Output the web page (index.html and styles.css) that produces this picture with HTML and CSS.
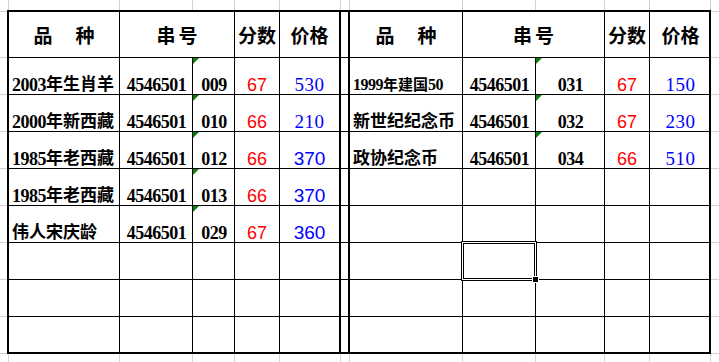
FILE: index.html
```html
<!DOCTYPE html>
<html lang="zh-CN">
<head>
<meta charset="utf-8">
<title>品种 串号 分数 价格</title>
<link rel="stylesheet" href="styles.css">
</head>
<body>
<div class="page">
  <div class="sheet">
    <!-- header row -->
    <div class="c h"><span class="ls2">品　种</span></div>
    <div class="c h span2"><span class="ls3">串号</span></div>
    <div class="c h">分数</div>
    <div class="c h tr">价格</div>
    <div class="c tr"></div>
    <div class="c h"><span class="ls2">品　种</span></div>
    <div class="c h span2"><span class="ls3">串号</span></div>
    <div class="c h">分数</div>
    <div class="c h lc">价格</div>

    <!-- row 1 -->
    <div class="c name"><span class="d">2003</span>年生肖羊</div>
    <div class="c num">4546501</div>
    <div class="c num err">009</div>
    <div class="c red">67</div>
    <div class="c blue tr">530</div>
    <div class="c tr"></div>
    <div class="c name small"><span class="d">1999</span>年建国<span class="d">50</span></div>
    <div class="c num">4546501</div>
    <div class="c num err">031</div>
    <div class="c red">67</div>
    <div class="c blue lc">150</div>

    <!-- row 2 -->
    <div class="c name"><span class="d">2000</span>年新西藏</div>
    <div class="c num">4546501</div>
    <div class="c num err">010</div>
    <div class="c red">66</div>
    <div class="c blue tr">210</div>
    <div class="c tr"></div>
    <div class="c name">新世纪纪念币</div>
    <div class="c num">4546501</div>
    <div class="c num err">032</div>
    <div class="c red">67</div>
    <div class="c blue lc">230</div>

    <!-- row 3 -->
    <div class="c name"><span class="d">1985</span>年老西藏</div>
    <div class="c num">4546501</div>
    <div class="c num err">012</div>
    <div class="c red">66</div>
    <div class="c blue bs tr">370</div>
    <div class="c tr"></div>
    <div class="c name">政协纪念币</div>
    <div class="c num">4546501</div>
    <div class="c num err">034</div>
    <div class="c red">66</div>
    <div class="c blue lc">510</div>

    <!-- row 4 -->
    <div class="c name"><span class="d">1985</span>年老西藏</div>
    <div class="c num">4546501</div>
    <div class="c num err">013</div>
    <div class="c red">66</div>
    <div class="c blue bs tr">370</div>
    <div class="c tr"></div>
    <div class="c"></div>
    <div class="c"></div>
    <div class="c"></div>
    <div class="c"></div>
    <div class="c lc"></div>

    <!-- row 5 -->
    <div class="c name">伟人宋庆龄</div>
    <div class="c num">4546501</div>
    <div class="c num err">029</div>
    <div class="c red">67</div>
    <div class="c blue bs tr">360</div>
    <div class="c tr"></div>
    <div class="c"></div>
    <div class="c"></div>
    <div class="c"></div>
    <div class="c"></div>
    <div class="c lc"></div>

    <!-- row 6 -->
    <div class="c"></div>
    <div class="c"></div>
    <div class="c"></div>
    <div class="c"></div>
    <div class="c tr"></div>
    <div class="c tr"></div>
    <div class="c"></div>
    <div class="c sel"></div>
    <div class="c"></div>
    <div class="c"></div>
    <div class="c lc"></div>

    <!-- row 7 -->
    <div class="c"></div>
    <div class="c"></div>
    <div class="c"></div>
    <div class="c"></div>
    <div class="c tr"></div>
    <div class="c tr"></div>
    <div class="c"></div>
    <div class="c"></div>
    <div class="c"></div>
    <div class="c"></div>
    <div class="c lc"></div>

    <!-- row 8 (last) -->
    <div class="c lr"></div>
    <div class="c lr"></div>
    <div class="c lr"></div>
    <div class="c lr"></div>
    <div class="c tr lr"></div>
    <div class="c tr lr"></div>
    <div class="c lr"></div>
    <div class="c lr"></div>
    <div class="c lr"></div>
    <div class="c lr"></div>
    <div class="c lc lr"></div>
  </div>
</div>
</body>
</html>
```

FILE: styles.css
```css
html, body {
  margin: 0;
  padding: 0;
  background: #fff;
}

.page {
  --g: #d2d2d2;
  width: 719px;
  height: 362px;
  overflow: hidden;
  box-sizing: border-box;
  padding: 10px 0 0 7px;
  background-color: #fff;
  background-image:
    linear-gradient(var(--g), var(--g)), linear-gradient(var(--g), var(--g)),
    linear-gradient(var(--g), var(--g)), linear-gradient(var(--g), var(--g)),
    linear-gradient(var(--g), var(--g)), linear-gradient(var(--g), var(--g)),
    linear-gradient(var(--g), var(--g)), linear-gradient(var(--g), var(--g)),
    linear-gradient(var(--g), var(--g)), linear-gradient(var(--g), var(--g)),
    linear-gradient(var(--g), var(--g)), linear-gradient(var(--g), var(--g)),
    linear-gradient(var(--g), var(--g)), linear-gradient(var(--g), var(--g)),
    linear-gradient(var(--g), var(--g)), linear-gradient(var(--g), var(--g)),
    linear-gradient(var(--g), var(--g)), linear-gradient(var(--g), var(--g)),
    linear-gradient(var(--g), var(--g)), linear-gradient(var(--g), var(--g)),
    linear-gradient(var(--g), var(--g)), linear-gradient(var(--g), var(--g));
  background-repeat: no-repeat;
  background-size:
    1px 100%, 1px 100%, 1px 100%, 1px 100%, 1px 100%, 1px 100%,
    1px 100%, 1px 100%, 1px 100%, 1px 100%, 1px 100%, 1px 100%,
    100% 1px, 100% 1px, 100% 1px, 100% 1px, 100% 1px,
    100% 1px, 100% 1px, 100% 1px, 100% 1px, 100% 1px;
  background-position:
    8px 0, 119px 0, 192px 0, 234px 0, 279px 0, 340px 0,
    349px 0, 462px 0, 535px 0, 604px 0, 649px 0, 710px 0,
    0 11px, 0 57px, 0 94px, 0 131px, 0 168px,
    0 205px, 0 242px, 0 279px, 0 316px, 0 353px;
}

.sheet {
  display: grid;
  grid-template-columns: 111px 73px 42px 45px 61px 9px 113px 73px 69px 45px 59px;
  grid-template-rows: 46px repeat(7, 37px) 35px;
  width: 704px;
  box-sizing: border-box;
  border: 2px solid #000;
  background: #fff;
}

.c {
  position: relative;
  box-sizing: border-box;
  min-width: 0;
  border-right: 1px solid #000;
  border-bottom: 1px solid #000;
  display: flex;
  align-items: flex-end;
  justify-content: center;
  white-space: nowrap;
  font-family: "Liberation Serif", "Noto Sans CJK SC", serif;
  font-weight: 700;
  font-size: 17px;
  line-height: 18px;
  color: #000;
}

.h {
  align-items: center;
  font-family: "Noto Sans CJK SC", sans-serif;
  font-size: 19px;
  line-height: normal;
}

.span2 { grid-column: span 2; }

.ls2 { letter-spacing: 2px; margin-right: -2px; }
.ls3 { letter-spacing: 3px; margin-right: -3px; }

.name {
  justify-content: flex-start;
  padding-left: 3px;
}

.num,
.d {
  font-size: 18px;
  letter-spacing: -0.5px;
}

.num { padding-left: 1px; }

.small { font-size: 15px; }
.small .d { font-size: 16px; letter-spacing: -0.5px; }

.tr { border-right-width: 2px; }
.lc { border-right: 0; padding-left: 2px; }
.lr { border-bottom: 0; }

.red {
  color: #f00;
  font-family: "Liberation Sans", sans-serif;
  font-weight: 400;
  font-size: 18px;
}

.blue {
  color: #00f;
  font-family: "Liberation Serif", serif;
  font-weight: 400;
  font-size: 19px;
  letter-spacing: 0.5px;
}

.blue.bs {
  font-family: "Liberation Sans", sans-serif;
  font-size: 19px;
  letter-spacing: 0;
}

.err::before {
  content: "";
  position: absolute;
  top: 0;
  left: 0;
  width: 0;
  height: 0;
  border-top: 6px solid #0a7d0a;
  border-right: 6px solid transparent;
}

.sel::after {
  content: "";
  position: absolute;
  left: -2px;
  top: -2px;
  width: 76px;
  height: 40px;
  box-sizing: border-box;
  border: 1px solid #000;
  box-shadow: inset 0 0 0 1px #fff, inset 0 0 0 2px #000;
  z-index: 2;
}

.sel::before {
  content: "";
  position: absolute;
  left: 70px;
  top: 34px;
  width: 5px;
  height: 5px;
  background: #000;
  outline: 1px solid #fff;
  z-index: 3;
}
```
